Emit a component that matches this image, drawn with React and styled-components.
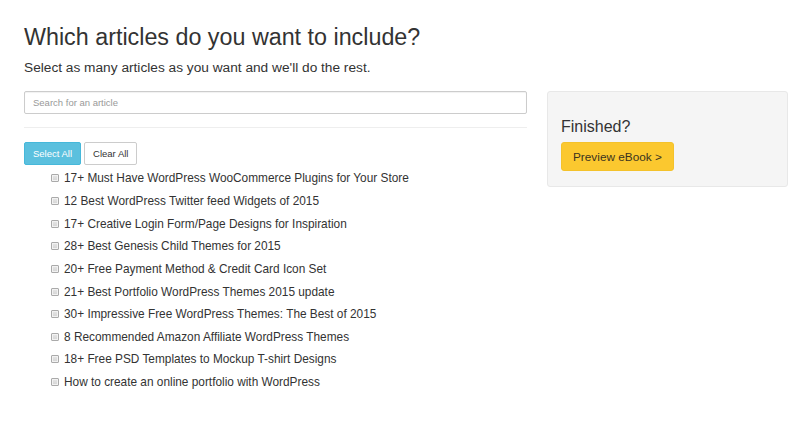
import React from "react";
import styled, { createGlobalStyle } from "styled-components";

const articles = [
  "17+ Must Have WordPress WooCommerce Plugins for Your Store",
  "12 Best WordPress Twitter feed Widgets of 2015",
  "17+ Creative Login Form/Page Designs for Inspiration",
  "28+ Best Genesis Child Themes for 2015",
  "20+ Free Payment Method & Credit Card Icon Set",
  "21+ Best Portfolio WordPress Themes 2015 update",
  "30+ Impressive Free WordPress Themes: The Best of 2015",
  "8 Recommended Amazon Affiliate WordPress Themes",
  "18+ Free PSD Templates to Mockup T-shirt Designs",
  "How to create an online portfolio with WordPress",
];

export default function App() {
  return (
    <>
      <GlobalStyle />
      <Page>
        <Title>Which articles do you want to include?</Title>
        <Lead>Select as many articles as you want and we'll do the rest.</Lead>
        <Columns>
          <Main>
            <Search placeholder="Search for an article" />
            <Rule />
            <Toolbar>
              <Button primary>Select All</Button>
              <Button>Clear All</Button>
            </Toolbar>
            <List>
              {articles.map((a) => (
                <Item key={a}>
                  <Check type="checkbox" />
                  <span>{a}</span>
                </Item>
              ))}
            </List>
          </Main>
          <Panel>
            <PanelTitle>Finished?</PanelTitle>
            <Preview>Preview eBook &gt;</Preview>
          </Panel>
        </Columns>
      </Page>
    </>
  );
}

const GlobalStyle = createGlobalStyle`
  body {
    margin: 0;
    background: #fff;
    color: #333;
    font-family: "Liberation Sans", Arial, Helvetica, sans-serif;
  }
`;

const Page = styled.div`
  padding: 22px 12px 0 24px;
`;

const Title = styled.h1`
  margin: 0;
  font-size: 23.3px;
  font-weight: 400;
  line-height: 30px;
  color: #333;
`;

const Lead = styled.p`
  margin: 6px 0 0;
  font-size: 13.7px;
  line-height: 20px;
  color: #333;
`;

const Columns = styled.div`
  display: grid;
  grid-template-columns: 503px 241px;
  column-gap: 20px;
  align-items: start;
  margin-top: 13px;
`;

const Main = styled.div`
  display: flex;
  flex-direction: column;
`;

const Search = styled.input`
  box-sizing: border-box;
  width: 100%;
  height: 23px;
  padding: 0 8px;
  border: 1px solid #ccc;
  border-radius: 2px;
  box-shadow: inset 0 1px 1px rgba(0, 0, 0, 0.06);
  font-family: inherit;
  font-size: 9.5px;
  color: #555;
  outline: none;

  &::placeholder {
    color: #999;
  }
`;

const Rule = styled.hr`
  width: 100%;
  margin: 13px 0 14px;
  border: 0;
  border-top: 1px solid #eee;
`;

const Toolbar = styled.div`
  display: flex;
  gap: 3px;
`;

const Button = styled.button`
  height: 23px;
  padding: 0 8px;
  border: 1px solid ${(p) => (p.primary ? "#46b8da" : "#ccc")};
  border-radius: 2px;
  background: ${(p) => (p.primary ? "#5bc0de" : "#fff")};
  color: ${(p) => (p.primary ? "#fff" : "#333")};
  font-family: inherit;
  font-size: 9.5px;
  cursor: pointer;
`;

const List = styled.ul`
  list-style: none;
  margin: 2px 0 0;
  padding: 0 0 0 27px;
`;

const Item = styled.li`
  display: flex;
  align-items: center;
  height: 22.65px;
  font-size: 11.85px;
  color: #333;
`;

const Check = styled.input`
  appearance: none;
  box-sizing: border-box;
  width: 8px;
  height: 8px;
  margin: 0 5px 0 0;
  border: 1px solid #aaa;
  border-radius: 1px;
  background: linear-gradient(#e6e6e6, #d4d4d4);
  box-shadow: inset 0 0 0 1px #f2f2f2;
  flex: none;
`;

const Panel = styled.div`
  box-sizing: border-box;
  height: 96px;
  padding: 24px 13px 0;
  background: #f5f5f5;
  border: 1px solid #e8e8e8;
  border-radius: 3px;
`;

const PanelTitle = styled.h3`
  margin: 0;
  font-size: 16px;
  font-weight: 400;
  line-height: 22px;
  color: #333;
`;

const Preview = styled.button`
  margin-top: 4px;
  height: 29px;
  padding: 0 11px;
  border: 1px solid #f4c22b;
  border-radius: 3px;
  background: #fbc82f;
  color: #3a3320;
  font-family: inherit;
  font-size: 11.8px;
  cursor: pointer;
`;
